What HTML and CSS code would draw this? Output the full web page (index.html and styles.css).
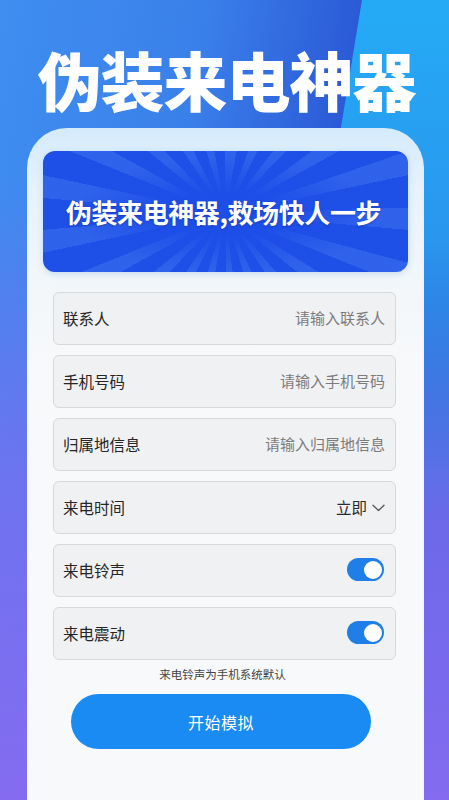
FILE: index.html
```html
<!DOCTYPE html>
<html lang="zh">
<head>
<meta charset="utf-8">
<link rel="stylesheet" href="styles.css">
</head>
<body>
<div class="screen">
  <h1 class="title">伪装来电神器</h1>
  <div class="phone">
    <div class="banner">
      <span class="banner-text">伪装来电神器,救场快人一步</span>
    </div>
    <div class="form">
      <div class="row">
        <span class="label">联系人</span>
        <span class="placeholder">请输入联系人</span>
      </div>
      <div class="row">
        <span class="label">手机号码</span>
        <span class="placeholder">请输入手机号码</span>
      </div>
      <div class="row">
        <span class="label">归属地信息</span>
        <span class="placeholder">请输入归属地信息</span>
      </div>
      <div class="row">
        <span class="label">来电时间</span>
        <span class="select">立即
          <svg class="chev" width="13" height="8" viewBox="0 0 13 8"><path d="M1 1.2 L6.5 6.5 L12 1.2" fill="none" stroke="#555" stroke-width="1.3" stroke-linecap="round" stroke-linejoin="round"/></svg>
        </span>
      </div>
      <div class="row">
        <span class="label">来电铃声</span>
        <span class="toggle"><span class="knob"></span></span>
      </div>
      <div class="row">
        <span class="label">来电震动</span>
        <span class="toggle"><span class="knob"></span></span>
      </div>
    </div>
    <p class="note">来电铃声为手机系统默认</p>
    <button class="start">开始模拟</button>
  </div>
</div>
</body>
</html>
```

FILE: styles.css
```css
* { box-sizing: border-box; }
html, body { margin: 0; padding: 0; }
body {
  font-family: "Noto Sans CJK SC", "Noto Sans", sans-serif;
}
.screen {
  position: relative;
  width: 449px;
  height: 800px;
  overflow: hidden;
  display: flex;
  flex-direction: column;
  background:
    linear-gradient(180deg, rgba(124,110,240,0) 0%, rgba(124,110,240,0) 22%, rgba(118,112,240,0.85) 60%, #846bf0 100%),
    linear-gradient(100deg, #3f8ef0 0%, #3a80ea 35%, #2c5cd8 60%, #1f3cb6 80%);
}
.screen::before {
  content: "";
  position: absolute;
  inset: 0;
  background: linear-gradient(180deg, #24abf6 0%, #2a96ee 30%, rgba(60,130,240,0) 65%);
  clip-path: polygon(362px 0, 449px 0, 449px 800px, 230px 800px);
}
.title {
  position: relative;
  margin: 38px 0 0;
  height: 80px;
  line-height: 80px;
  text-align: center;
  color: #fff;
  font-size: 64px;
  font-weight: 900;
  letter-spacing: -1px;
  padding-left: 4px;
}
.phone {
  position: relative;
  flex: 1;
  margin: 10px 25px 0 27px;
  border-radius: 40px 40px 0 0;
  background: linear-gradient(180deg, #d4ebfc 0px, #e6f2fc 60px, #f3f7fa 160px, #f8f9fa 260px, #f8f9fa 100%);
  padding: 23px 16px 0 16px;
  display: flex;
  flex-direction: column;
}
.banner {
  height: 121px;
  border-radius: 12px;
  background:
    radial-gradient(ellipse 42% 48% at 50% 52%, #1e4ee8 35%, rgba(30,78,232,0) 100%),
    repeating-conic-gradient(from 3deg at 50% 52%, rgba(110,165,255,0.22) 0deg 7deg, rgba(0,0,0,0) 7deg 17deg),
    #1e4fe6;
  display: flex;
  align-items: center;
  justify-content: center;
  box-shadow: 0 2px 6px rgba(80,140,220,0.25);
}
.banner-text {
  color: #fff;
  font-size: 26px;
  font-weight: 700;
  letter-spacing: -0.4px;
  text-shadow: 0 1px 2px rgba(0,0,50,0.25);
  margin-left: -4px;
}
.form {
  margin: 20px 12px 0 10px;
  display: flex;
  flex-direction: column;
  gap: 10px;
}
.row {
  height: 53px;
  border: 1px solid #d6d8da;
  border-radius: 6px;
  background: #f0f1f3;
  display: flex;
  align-items: center;
  justify-content: space-between;
  padding: 0 10px 2px 9px;
}
.label {
  font-size: 15.5px;
  color: #262626;
}
.placeholder {
  font-size: 15px;
  color: #7c7c7c;
}
.select {
  display: flex;
  align-items: center;
  gap: 5px;
  font-size: 15.5px;
  color: #2b2b2b;
}
.chev { display: block; margin-top: 2px; }
.toggle {
  position: relative;
  width: 37px;
  height: 23px;
  border-radius: 12px;
  background: #1f7fe6;
  margin-right: 1px;
}
.knob {
  position: absolute;
  right: 2.5px;
  top: 2.5px;
  width: 18px;
  height: 18px;
  border-radius: 50%;
  background: #fff;
}
.note {
  margin: 6px 0 0 -6px;
  text-align: center;
  font-size: 11.5px;
  line-height: 16px;
  color: #444;
}
.start {
  margin: 12px 0 0 28px;
  width: 300px;
  height: 55px;
  border: none;
  border-radius: 28px;
  background: #1a8bf2;
  color: #fff;
  font-family: "Noto Sans CJK SC", sans-serif;
  font-size: 16px;
  letter-spacing: 0.5px;
}
```
